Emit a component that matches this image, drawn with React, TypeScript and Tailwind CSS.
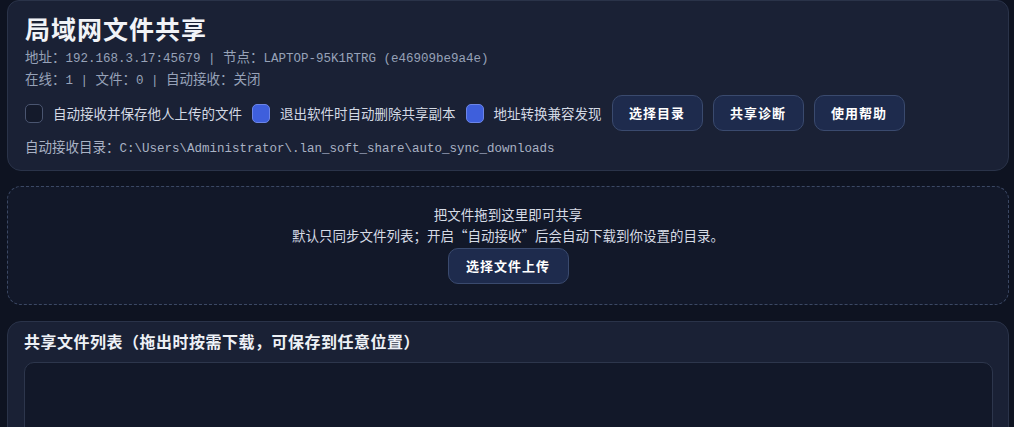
import React from 'react';

const mono = { fontFamily: '"Liberation Mono", "Noto Sans CJK SC", monospace' };
const sans = { fontFamily: '"Noto Sans CJK SC", "Noto Sans", sans-serif' };

const Cjk: React.FC<{ children: React.ReactNode }> = ({ children }) => (
  <span className="text-[13.5px] leading-none" style={sans}>{children}</span>
);

const Check: React.FC<{ on?: boolean; label: string }> = ({ on, label }) => (
  <label className="flex items-center gap-[10px] text-[13.5px] text-[#d3d9e4]">
    <span
      className={
        on
          ? 'w-[18px] h-[19px] rounded-[5px] bg-[#3e5fdc] border border-[#6c85e6]'
          : 'w-[18px] h-[19px] rounded-[5px] bg-[#141a2b] border border-[#4a5570]'
      }
    />
    <span>{label}</span>
  </label>
);

const Btn: React.FC<{ children: React.ReactNode; className?: string }> = ({ children, className }) => (
  <button
    className={
      'h-[36px] rounded-[10px] bg-[#1e2b4d] border border-[#3a4a6e] text-white font-bold text-[13px] tracking-[1px] ' +
      (className || '')
    }
  >
    {children}
  </button>
);

export default function App() {
  return (
    <div className="w-[1014px] h-[427px] overflow-hidden bg-[#0e1321] pl-[7px] pr-[5px]" style={sans}>
      {/* header card */}
      <div className="h-[171px] rounded-b-[14px] rounded-t-[12px] border border-[#2a3349] bg-[#1a2135] pl-[17px] pr-4 pt-[12px] flex flex-col">
        <h1 className="text-[25px] leading-[31px] font-bold text-[#f1f3f7] tracking-[1px]">局域网文件共享</h1>
        <div className="mt-[5px] h-[20px] text-[12.5px] leading-[20px] text-[#97a2b8]" style={mono}>
          <Cjk>地址：</Cjk>192.168.3.17:45679 | <Cjk>节点：</Cjk>LAPTOP-95K1RTRG (e46909be9a4e)
        </div>
        <div className="mt-[2px] h-[20px] text-[12.5px] leading-[20px] text-[#97a2b8]" style={mono}>
          <Cjk>在线：</Cjk>1 | <Cjk>文件：</Cjk>0 | <Cjk>自动接收：</Cjk><Cjk>关闭</Cjk>
        </div>
        <div className="mt-[4px] flex items-center gap-[10px]">
          <Check label="自动接收并保存他人上传的文件" />
          <Check on label="退出软件时自动删除共享副本" />
          <Check on label="地址转换兼容发现" />
          <Btn className="w-[91px] ml-0">选择目录</Btn>
          <Btn className="w-[91px]">共享诊断</Btn>
          <Btn className="w-[91px]">使用帮助</Btn>
        </div>
        <div className="mt-[8px] h-[20px] text-[12.5px] leading-[20px] text-[#a9b2c4]" style={mono}>
          <Cjk>自动接收目录：</Cjk>C:\Users\Administrator\.lan_soft_share\auto_sync_downloads
        </div>
      </div>

      {/* drop zone */}
      <div className="mt-[15px] h-[119px] rounded-[14px] border-[1.5px] border-dashed border-[#3b4864] bg-[#121829] flex flex-col items-center pt-[17px] text-[13.5px] leading-[20px] text-[#d6dbe5]">
        <div>把文件拖到这里即可共享</div>
        <div className="mt-px">默认只同步文件列表；开启“自动接收”后会自动下载到你设置的目录。</div>
        <Btn className="mt-[3px] w-[121px]">选择文件上传</Btn>
      </div>

      {/* list card */}
      <div className="mt-4 h-[140px] rounded-t-[14px] border border-[#2a3349] bg-[#1a2135] pl-[16px] pr-[15px] pt-[9px]">
        <div className="text-[16px] leading-[20px] font-bold text-[#eef1f6] tracking-[0.5px]">
          共享文件列表（拖出时按需下载，可保存到任意位置）
        </div>
        <div className="mt-[11px] h-[100px] rounded-t-[10px] border border-[#2d364c] bg-[#121829]" />
      </div>
    </div>
  );
}
